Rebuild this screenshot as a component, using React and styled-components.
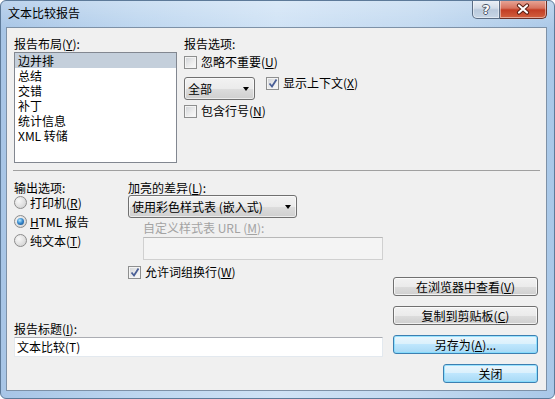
import styled, { createGlobalStyle } from "styled-components";

const GlobalStyle = createGlobalStyle`
  html, body {
    margin: 0;
    padding: 0;
    background: #fff;
  }
  body {
    font-family: "Noto Sans CJK SC", "Noto Sans", sans-serif;
    font-size: 12px;
    color: #000;
  }
  #root {
    width: 555px;
    height: 399px;
  }
`;

const Window = styled.div`
  width: 555px;
  height: 399px;
  box-sizing: border-box;
  border: 1px solid #5d7a99;
  border-radius: 6px;
  overflow: hidden;
  display: flex;
  flex-direction: column;
  background: linear-gradient(
      to bottom,
      rgba(255, 255, 255, 0.25),
      rgba(255, 255, 255, 0) 30px
    ),
    linear-gradient(
      to right,
      #a7c5e6 0%,
      #bdd6ef 25%,
      #cfe2f5 50%,
      #c2d9f0 75%,
      #a9c8e8 100%
    );
`;

const TitleBar = styled.div`
  height: 26px;
  display: flex;
  align-items: flex-start;
  padding-left: 7px;
`;

const Title = styled.span`
  line-height: 22px;
  margin-top: 1px;
`;

const CaptionButtons = styled.div`
  margin-left: auto;
  margin-right: 7px;
  margin-top: -1px;
  display: flex;
`;

const CaptionButton = styled.div`
  width: ${(p) => (p.$close ? 47 : 28)}px;
  height: 19px;
  box-sizing: border-box;
  border: 1px solid ${(p) => (p.$close ? "#6b2e24" : "#5b6d84")};
  border-top: none;
  border-left: ${(p) => (p.$close ? "none" : "1px solid #5b6d84")};
  border-radius: ${(p) => (p.$close ? "0 0 5px 0" : "0 0 0 5px")};
  display: flex;
  align-items: center;
  justify-content: center;
  box-shadow: inset 0 0 0 1px rgba(255, 255, 255, 0.45);
  background: ${(p) =>
    p.$close
      ? "linear-gradient(#e9a99b 0%, #d7735f 45%, #c23d24 55%, #d2603e 100%)"
      : "linear-gradient(#eef2f8 0%, #d3dde9 45%, #b9c9dc 55%, #c7d6e6 100%)"};
`;

const HelpGlyph = styled.span`
  font-family: "DejaVu Sans", sans-serif;
  font-weight: bold;
  font-size: 13px;
  line-height: 1;
  color: #fff;
  text-shadow: 1px 0 0 #4a5566, -1px 0 0 #4a5566, 0 1px 0 #4a5566,
    0 -1px 0 #4a5566;
`;

const Client = styled.div`
  flex: 1;
  margin: 0 7px 7px 5px;
  box-sizing: border-box;
  border: 1px solid #7d91a7;
  background: #f0f0f0;
  padding: 8px 7px 0 7px;
`;

const TopSection = styled.div`
  display: flex;
  gap: 7px;
`;

const Column = styled.div`
  display: flex;
  flex-direction: column;
  align-items: flex-start;
  width: ${(p) => (p.$w ? `${p.$w}px` : "auto")};
  flex-shrink: 0;
`;

const Label = styled.div`
  line-height: 16px;
  height: 16px;
  white-space: nowrap;
  color: ${(p) => (p.$disabled ? "#a3a3a3" : "#000")};
  margin-top: ${(p) => p.$mt || 0}px;
  margin-left: ${(p) => p.$ml || 0}px;
`;

const U = styled.span`
  text-decoration: underline;
`;

const ListBox = styled.div`
  width: 163px;
  height: 111px;
  box-sizing: border-box;
  border: 1px solid #828790;
  background: #fff;
`;

const ListItem = styled.div`
  height: 15px;
  line-height: 15px;
  padding-left: 3px;
  white-space: nowrap;
  background: ${(p) => (p.$selected ? "#c4cfdb" : "transparent")};
`;

const CheckRow = styled.div`
  display: flex;
  align-items: center;
  gap: 4px;
  height: 16px;
  line-height: 16px;
  white-space: nowrap;
  margin-top: ${(p) => p.$mt || 0}px;
`;

const Box = styled.span`
  position: relative;
  width: 13px;
  height: 13px;
  box-sizing: border-box;
  border: 1px solid #8e8f8f;
  flex-shrink: 0;
  background: linear-gradient(135deg, #cfd2d6 0%, #eeeeee 60%, #fbfbfb 100%);
  box-shadow: inset 0 0 0 1px #f4f4f4;

  svg {
    position: absolute;
    left: 1px;
    top: 0px;
  }
`;

const RadioRow = styled.div`
  display: flex;
  align-items: center;
  gap: 3px;
  height: 19px;
  line-height: 19px;
  white-space: nowrap;
`;

const RadioGroup = styled.div`
  display: flex;
  flex-direction: column;
  margin-top: -3px;
`;

const RadioCircle = styled.span`
  width: 13px;
  height: 13px;
  box-sizing: border-box;
  border-radius: 50%;
  border: 1px solid #8c8c8c;
  flex-shrink: 0;
  display: flex;
  align-items: center;
  justify-content: center;
  background: radial-gradient(circle at 35% 35%, #f8f8f8 0%, #dedede 60%, #cacaca 100%);

  &::after {
    content: "";
    display: ${(p) => (p.$checked ? "block" : "none")};
    width: 7px;
    height: 7px;
    border-radius: 50%;
    background: radial-gradient(circle at 40% 35%, #b9ecff 0%, #3b8cd0 45%, #12457c 100%);
  }
`;

const ComboRow = styled.div`
  display: flex;
  align-items: flex-start;
  gap: 11px;
  margin-top: 7px;
`;

const Combo = styled.div`
  width: ${(p) => p.$w}px;
  height: 23px;
  box-sizing: border-box;
  border: 1px solid #707070;
  border-radius: 3px;
  margin-top: ${(p) => p.$mt || 0}px;
  display: flex;
  align-items: center;
  justify-content: space-between;
  padding: 0 5px 0 3px;
  white-space: nowrap;
  box-shadow: inset 0 0 0 1px rgba(255, 255, 255, 0.6);
  background: linear-gradient(#f2f2f2 0%, #ebebeb 50%, #dddddd 50%, #cfcfcf 100%);
`;

const Arrow = styled.span`
  width: 0;
  height: 0;
  border-left: 3.5px solid transparent;
  border-right: 3.5px solid transparent;
  border-top: 4px solid #000;
`;

const Separator = styled.div`
  height: 1px;
  background: #a0a0a0;
  margin: 7px -1px 0;
`;

const BottomSection = styled.div`
  display: flex;
  gap: 10px;
`;

const LeftArea = styled.div`
  width: 369px;
  display: flex;
  flex-direction: column;
`;

const OptionsRow = styled.div`
  display: flex;
  margin-top: 9px;
`;

const TextBox = styled.div`
  width: ${(p) => p.$w}px;
  height: ${(p) => p.$h}px;
  box-sizing: border-box;
  margin-top: ${(p) => p.$mt || 0}px;
  margin-left: ${(p) => p.$ml || 0}px;
  border: 1px solid ${(p) => (p.$disabled ? "#d0d0d0" : "#e3e9ef")};
  border-top-color: ${(p) => (p.$disabled ? "#b8b8b8" : "#abadb3")};
  background: ${(p) => (p.$disabled ? "#f4f4f4" : "#fff")};
  padding-left: 2px;
  line-height: ${(p) => p.$h - 2}px;
  white-space: nowrap;
`;

const ButtonColumn = styled.div`
  width: 145px;
  display: flex;
  flex-direction: column;
  align-items: flex-end;
  gap: 10px;
  padding-top: 106px;
`;

const Button = styled.div`
  width: ${(p) => p.$w || 145}px;
  height: 19px;
  box-sizing: border-box;
  border: 1px solid ${(p) => (p.$default ? "#3c7fb1" : "#707070")};
  border-radius: 3px;
  display: flex;
  align-items: center;
  justify-content: center;
  white-space: nowrap;
  line-height: 17px;
  box-shadow: inset 0 0 0 1px
    ${(p) => (p.$default ? "rgba(120, 220, 255, 0.7)" : "rgba(255, 255, 255, 0.7)")};
  background: ${(p) =>
    p.$default
      ? "linear-gradient(#eaf6fd 0%, #d9f0fc 50%, #bee6fd 50%, #a7d9f5 100%)"
      : "linear-gradient(#f2f2f2 0%, #ebebeb 50%, #dddddd 50%, #cfcfcf 100%)"};
`;

function CheckMark() {
  return (
    <svg width="10" height="11" viewBox="0 0 10 11">
      <path
        d="M1.5 5.5 L4 8.5 L8.5 1.5"
        fill="none"
        stroke="#4a5f96"
        strokeWidth="1.8"
      />
    </svg>
  );
}

function Checkbox({ checked, children, mt }) {
  return (
    <CheckRow $mt={mt}>
      <Box>{checked && <CheckMark />}</Box>
      <span>{children}</span>
    </CheckRow>
  );
}

function Radio({ checked, children }) {
  return (
    <RadioRow>
      <RadioCircle $checked={checked} />
      <span>{children}</span>
    </RadioRow>
  );
}

function CloseGlyph() {
  return (
    <svg width="16" height="12" viewBox="0 0 16 12">
      <path
        d="M4 2.5 L12 9.5 M12 2.5 L4 9.5"
        stroke="#5b1f14"
        strokeWidth="4.2"
        strokeLinecap="round"
      />
      <path
        d="M4 2.5 L12 9.5 M12 2.5 L4 9.5"
        stroke="#fff"
        strokeWidth="2.2"
        strokeLinecap="round"
      />
    </svg>
  );
}

const layouts = ["边并排", "总结", "交错", "补丁", "统计信息", "XML 转储"];

function App() {
  return (
    <>
      <GlobalStyle />
      <Window>
        <TitleBar>
          <Title>文本比较报告</Title>
          <CaptionButtons>
            <CaptionButton>
              <HelpGlyph>?</HelpGlyph>
            </CaptionButton>
            <CaptionButton $close>
              <CloseGlyph />
            </CaptionButton>
          </CaptionButtons>
        </TitleBar>

        <Client>
          <TopSection>
            <Column $w={163}>
              <Label>
                报告布局(<U>Y</U>):
              </Label>
              <ListBox>
                {layouts.map((item, i) => (
                  <ListItem key={item} $selected={i === 0}>
                    {item}
                  </ListItem>
                ))}
              </ListBox>
            </Column>

            <Column>
              <Label>报告选项:</Label>
              <Checkbox mt={2}>
                忽略不重要(<U>U</U>)
              </Checkbox>
              <ComboRow>
                <Combo $w={71}>
                  <span>全部</span>
                  <Arrow />
                </Combo>
                <Checkbox checked mt={-2}>
                  显示上下文(<U>X</U>)
                </Checkbox>
              </ComboRow>
              <Checkbox mt={3}>
                包含行号(<U>N</U>)
              </Checkbox>
            </Column>
          </TopSection>

          <Separator />

          <BottomSection>
            <LeftArea>
              <OptionsRow>
                <Column $w={114}>
                  <Label>输出选项:</Label>
                  <RadioGroup>
                    <Radio>
                      打印机(<U>R</U>)
                    </Radio>
                    <Radio checked>
                      <U>H</U>TML 报告
                    </Radio>
                    <Radio>
                      纯文本(<U>T</U>)
                    </Radio>
                  </RadioGroup>
                </Column>

                <Column>
                  <Label>
                    加亮的差异(<U>L</U>):
                  </Label>
                  <Combo $w={169} $mt={-1}>
                    <span>使用彩色样式表 (嵌入式)</span>
                    <Arrow />
                  </Combo>
                  <Label $disabled $mt={2} $ml={15}>
                    自定义样式表 URL (<U>M</U>):
                  </Label>
                  <TextBox $disabled $w={240} $h={23} $mt={1} $ml={15} />
                  <Checkbox checked mt={4}>
                    允许词组换行(<U>W</U>)
                  </Checkbox>
                </Column>
              </OptionsRow>

              <Label $mt={41}>
                报告标题(<U>I</U>):
              </Label>
              <TextBox $w={369} $h={20}>
                文本比较(T)
              </TextBox>
            </LeftArea>

            <ButtonColumn>
              <Button>
                在浏览器中查看(<U>V</U>)
              </Button>
              <Button>
                复制到剪贴板(<U>C</U>)
              </Button>
              <Button $default>
                另存为(<U>A</U>)...
              </Button>
              <Button $default $w={95}>
                关闭
              </Button>
            </ButtonColumn>
          </BottomSection>
        </Client>
      </Window>
    </>
  );
}

export default App;
